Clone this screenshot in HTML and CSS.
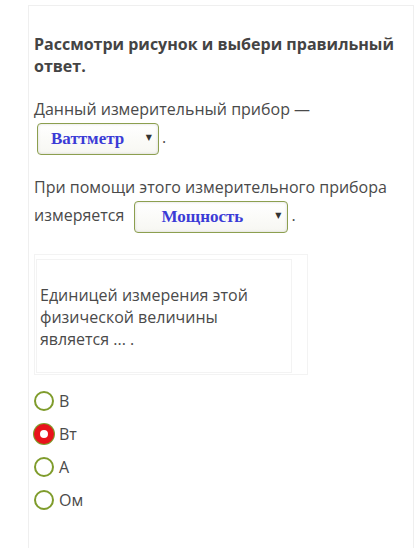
FILE: index.html
```html
<!DOCTYPE html>
<html lang="ru">
<head>
<meta charset="utf-8">
<link rel="stylesheet" href="styles.css">
</head>
<body>
<div class="card">
  <h2 class="title">Рассмотри рисунок и выбери правильный ответ.</h2>
  <p class="para">Данный измерительный прибор —<br><span class="sel sel1"><span class="sel-text">Ваттметр</span><span class="arrow">▼</span></span>.</p>
  <p class="para">При помощи этого измерительного прибора измеряется <span class="sel sel2"><span class="sel-text">Мощность</span><span class="arrow">▼</span></span>.</p>
  <div class="tbl">
    <div class="cell">Единицей измерения этой физической величины является ... .</div>
  </div>
  <ul class="options">
    <li class="opt"><span class="radio"></span>В</li>
    <li class="opt"><span class="radio checked"></span>Вт</li>
    <li class="opt"><span class="radio"></span>А</li>
    <li class="opt"><span class="radio"></span>Ом</li>
  </ul>
</div>
</body>
</html>
```
FILE: styles.css
```css
html, body { margin: 0; padding: 0; background: #fff; }
body { font-family: "Open Sans", sans-serif; color: #4a4a4a; }
.card {
  margin: 5px 0 0 28px;
  width: 386px;
  min-height: 560px;
  border: 1px solid #efefef;
  border-bottom: none;
  padding: 27px 5px 0 5px;
  box-sizing: border-box;
}
.title {
  margin: 0;
  font-size: 16px;
  font-weight: 700;
  line-height: 22px;
  color: #444;
}
.para {
  margin: 18px 0 0 0;
  font-size: 16px;
  line-height: 28px;
}
.sel {
  display: inline-flex;
  align-items: center;
  justify-content: space-between;
  height: 32px;
  box-sizing: border-box;
  border: 1px solid #8c9f4f;
  border-radius: 4px;
  background: linear-gradient(#fff, #f7f7f2);
  box-shadow: inset 0 0 3px rgba(0,0,0,0.15);
  vertical-align: middle;
  font-family: "Liberation Serif", serif;
  font-weight: 700;
  font-size: 17px;
  line-height: 20px;
  color: #3b3bd6;
  padding-right: 6px;
}
.sel1 { width: 122px; margin: 0 3px 0 3px; padding-left: 13px; }
.sel2 { width: 154px; margin-left: 6px; margin-right: 3px; padding-left: 26px; }
.arrow {
  font-size: 8px;
  line-height: 10px;
  color: #333;
  font-family: "DejaVu Sans", sans-serif;
  margin-top: -2px;
}
.tbl {
  margin-top: 21px;
  width: 274px;
  border: 1px solid #f3f3f3;
  padding: 4px 15px 1px 1px;
  box-sizing: border-box;
}
.cell {
  border: 1px solid #f3f3f3;
  padding: 24px 3px 22px 3px;
  font-size: 16px;
  line-height: 22px;
}
.options {
  list-style: none;
  margin: 9px 0 0 0;
  padding: 0;
}
.opt {
  display: flex;
  align-items: center;
  height: 33px;
  font-size: 16px;
  color: #4a4a4a;
}
.radio {
  width: 20px;
  height: 20px;
  box-sizing: border-box;
  border: 2px solid #7f9c2c;
  border-radius: 50%;
  margin-right: 5px;
  flex: none;
}
.radio.checked {
  border: 6px solid #e8131b;
  background: #fff;
  box-shadow: 0 0 0 1px #7f9c2c;
}
```
